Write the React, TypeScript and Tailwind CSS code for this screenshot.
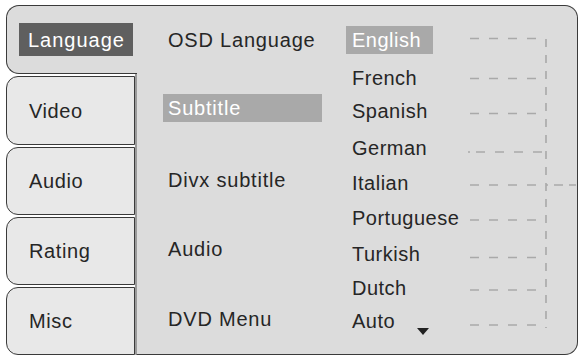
import React from 'react';

const tabs = [
  { label: 'Video', h: 'h-[69px]' },
  { label: 'Audio', h: 'h-[68px]' },
  { label: 'Rating', h: 'h-[68px]' },
  { label: 'Misc', h: 'h-[68px]' },
];

// middle column, margins tuned to the reference rows
const settings = [
  { label: 'OSD Language', mt: 'mt-[20px]' },
  { label: 'Subtitle', mt: 'mt-[40px]', active: true },
  { label: 'Divx subtitle', mt: 'mt-[44px]' },
  { label: 'Audio', mt: 'mt-[41px]' },
  { label: 'DVD Menu', mt: 'mt-[42px]' },
];

const languages = [
  { label: 'English', mt: 'mt-[20px]', active: true },
  { label: 'French', mt: 'mt-[10px]' },
  { label: 'Spanish', mt: 'mt-[5px]' },
  { label: 'German', mt: 'mt-[9px]' },
  { label: 'Italian', mt: 'mt-[7px]' },
  { label: 'Portuguese', mt: 'mt-[7px]' },
  { label: 'Turkish', mt: 'mt-[8px]' },
  { label: 'Dutch', mt: 'mt-[6px]' },
  { label: 'Auto', mt: 'mt-[5px]', more: true },
];

// y of each dashed leader, in panel coordinates
const leaderY = [32.5, 72.5, 107.5, 146, 179, 214, 251.5, 284, 319];

function Leaders() {
  return (
    <svg width="110" height="348" viewBox="0 0 110 348" className="shrink-0">
      <g stroke="#a9a9a9" strokeWidth="1.6" fill="none">
        {leaderY.map((y, i) =>
          i === 3 ? (
            <path key={i} d={`M2 ${y} H80`} strokeDasharray="2 6 9 10 9 10 9 10 9 10" />
          ) : (
            <path key={i} d={`M4 ${y} H70`} strokeDasharray="9 10" />
          )
        )}
        <path d="M80 33 V322" strokeDasharray="8 8" />
        <path d="M80 179 H110" strokeDasharray="2 6 9 6 9 6" />
      </g>
    </svg>
  );
}

export default function App() {
  return (
    <div className="w-[581px] h-[357px] bg-white pt-[5px] pl-[6px] font-['Liberation_Sans',Arial,sans-serif] text-[#262626]">
      <div className="flex h-[350px] w-[572px]">
        {/* tabs */}
        <div className="w-[129px] shrink-0 flex flex-col gap-[2px]">
          <div className="relative z-10 w-[131px] h-[69px] shrink-0 bg-[#dcdcdc] border-y border-l border-[#3a3a3a] rounded-l-[13px] flex items-center pl-[12px]">
            <span className="bg-[#5f5f5f] text-white h-[33px] w-[114px] flex items-center pl-[9px] text-[20px] tracking-[1px]">
              Language
            </span>
          </div>
          {tabs.map((t) => (
            <div
              key={t.label}
              className={`${t.h} shrink-0 bg-[#e8e8e8] border border-[#3a3a3a] rounded-l-[12px] flex items-center pl-[22px] text-[20px] tracking-[0.6px]`}
            >
              {t.label}
            </div>
          ))}
        </div>

        {/* panel */}
        <div className="flex-1 h-full bg-[#dcdcdc] border-y border-r border-l-2 border-[#3a3a3a] border-l-[#9a9a9a] rounded-r-[13px] flex">
          <div className="ml-[26px] w-[159px] shrink-0 flex flex-col">
            {settings.map((s) => (
              <div
                key={s.label}
                className={`${s.mt} h-[28px] flex items-center pl-[5px] text-[20px] tracking-[0.8px] whitespace-nowrap ${
                  s.active ? 'bg-[#a9a9a9] text-white' : ''
                }`}
              >
                {s.label}
              </div>
            ))}
          </div>

          <div className="ml-[24px] w-[120px] shrink-0 flex flex-col">
            {languages.map((l) => (
              <div key={l.label} className={`${l.mt} h-[28px] flex items-center`}>
                <span
                  className={`h-[28px] flex items-center pl-[6px] text-[20px] tracking-[0.5px] whitespace-nowrap ${
                    l.active ? 'bg-[#a9a9a9] text-white w-[87px]' : ''
                  }`}
                >
                  {l.label}
                </span>
                {l.more && (
                  <svg width="12" height="7" viewBox="0 0 12 7" className="self-end ml-[22px]">
                    <path d="M0 0 H12 L6 7 Z" fill="#222" />
                  </svg>
                )}
              </div>
            ))}
          </div>

          <Leaders />
        </div>
      </div>
    </div>
  );
}
